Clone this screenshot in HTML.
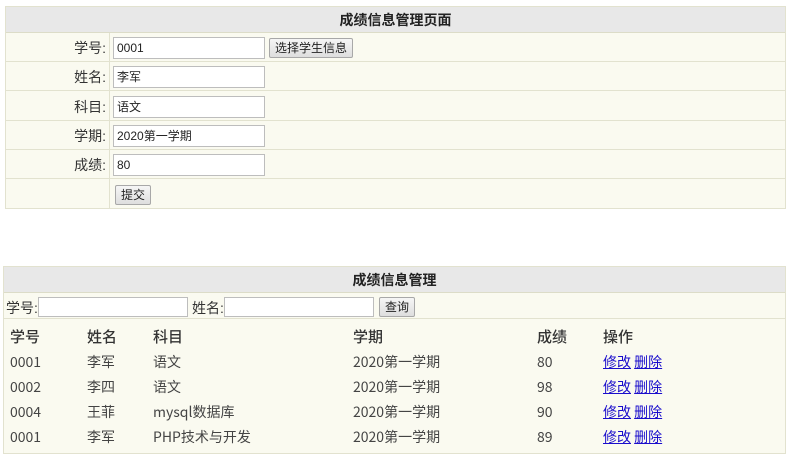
<!DOCTYPE html>
<html><head><meta charset="utf-8"><style>
*{margin:0;padding:0;box-sizing:border-box}
body{width:792px;height:457px;background:#fff;font-family:"Liberation Sans","Noto Sans CJK SC",sans-serif;color:#333;position:relative;overflow:hidden}
.a{position:absolute}
.box{background:#fafaf0;border:1px solid #e2e2cf}
.hd{background:#e8e8e8;border-bottom:1px solid #dcdcc8;font-weight:bold;font-size:14px;text-align:center;color:#222}
.row{border-bottom:1px solid #e2e2cf}
.lbl{font-size:14px;text-align:right;color:#333}
.inp{background:#fff;border:1px solid #bdbdbd;font-size:12px;padding-left:3px;color:#222;line-height:20px;height:22px}
.btn{background:linear-gradient(#f6f6f6,#dedede);border:1px solid #a8a8a8;border-radius:2px;font-size:12px;text-align:center;line-height:18px;height:20px;color:#222}
.t{font-family:"Noto Sans CJK SC",sans-serif;font-size:14px;line-height:22px;color:#444;white-space:nowrap}
.th{font-size:15px;color:#333;font-weight:500}
a{color:#1a0dcc;text-decoration:underline}
</style></head><body>
<div class="a box" style="left:5px;top:6px;width:781px;height:203px"></div>
<div class="a hd" style="left:6px;top:7px;width:779px;height:26px;line-height:26px">成绩信息管理页面</div>
<div class="a" style="left:109px;top:33px;width:1px;height:175px;background:#e2e2cf"></div>
<div class="a row" style="left:6px;top:33px;width:779px;height:29px"></div>
<div class="a row" style="left:6px;top:62px;width:779px;height:29px"></div>
<div class="a row" style="left:6px;top:91px;width:779px;height:30px"></div>
<div class="a row" style="left:6px;top:121px;width:779px;height:29px"></div>
<div class="a row" style="left:6px;top:150px;width:779px;height:29px"></div>

<div class="a lbl" style="left:6px;top:38px;width:100px">学号:</div>
<div class="a inp" style="left:113px;top:37px;width:152px">0001</div>
<div class="a btn" style="left:269px;top:38px;width:84px">选择学生信息</div>
<div class="a lbl" style="left:6px;top:67px;width:100px">姓名:</div>
<div class="a inp" style="left:113px;top:66px;width:152px">李军</div>
<div class="a lbl" style="left:6px;top:97px;width:100px">科目:</div>
<div class="a inp" style="left:113px;top:96px;width:152px">语文</div>
<div class="a lbl" style="left:6px;top:126px;width:100px">学期:</div>
<div class="a inp" style="left:113px;top:125px;width:152px">2020第一学期</div>
<div class="a lbl" style="left:6px;top:155px;width:100px">成绩:</div>
<div class="a inp" style="left:113px;top:154px;width:152px">80</div>
<div class="a btn" style="left:115px;top:185px;width:36px">提交</div>

<div class="a box" style="left:3px;top:266px;width:783px;height:188px"></div>
<div class="a hd" style="left:4px;top:267px;width:781px;height:26px;line-height:26px">成绩信息管理</div>
<div class="a row" style="left:4px;top:293px;width:781px;height:26px"></div>
<div class="a lbl" style="left:6px;top:298px;text-align:left">学号:</div>
<div class="a inp" style="left:38px;top:297px;width:150px;height:20px"></div>
<div class="a lbl" style="left:192px;top:298px;text-align:left">姓名:</div>
<div class="a inp" style="left:224px;top:297px;width:150px;height:20px"></div>
<div class="a btn" style="left:379px;top:297px;width:36px">查询</div>

<div class="a t th" style="left:10px;top:326px">学号</div>
<div class="a t th" style="left:87px;top:326px">姓名</div>
<div class="a t th" style="left:153px;top:326px">科目</div>
<div class="a t th" style="left:353px;top:326px">学期</div>
<div class="a t th" style="left:537px;top:326px">成绩</div>
<div class="a t th" style="left:603px;top:326px">操作</div>

<div class="a t" style="left:10px;top:351px">0001</div><div class="a t" style="left:87px;top:351px">李军</div><div class="a t" style="left:153px;top:351px">语文</div><div class="a t" style="left:353px;top:351px">2020第一学期</div><div class="a t" style="left:537px;top:351px">80</div><div class="a t" style="left:603px;top:351px"><a>修改</a> <a>删除</a></div>
<div class="a t" style="left:10px;top:376px">0002</div><div class="a t" style="left:87px;top:376px">李四</div><div class="a t" style="left:153px;top:376px">语文</div><div class="a t" style="left:353px;top:376px">2020第一学期</div><div class="a t" style="left:537px;top:376px">98</div><div class="a t" style="left:603px;top:376px"><a>修改</a> <a>删除</a></div>
<div class="a t" style="left:10px;top:401px">0004</div><div class="a t" style="left:87px;top:401px">王菲</div><div class="a t" style="left:153px;top:401px">mysql数据库</div><div class="a t" style="left:353px;top:401px">2020第一学期</div><div class="a t" style="left:537px;top:401px">90</div><div class="a t" style="left:603px;top:401px"><a>修改</a> <a>删除</a></div>
<div class="a t" style="left:10px;top:426px">0001</div><div class="a t" style="left:87px;top:426px">李军</div><div class="a t" style="left:153px;top:426px">PHP技术与开发</div><div class="a t" style="left:353px;top:426px">2020第一学期</div><div class="a t" style="left:537px;top:426px">89</div><div class="a t" style="left:603px;top:426px"><a>修改</a> <a>删除</a></div>
</body></html>
